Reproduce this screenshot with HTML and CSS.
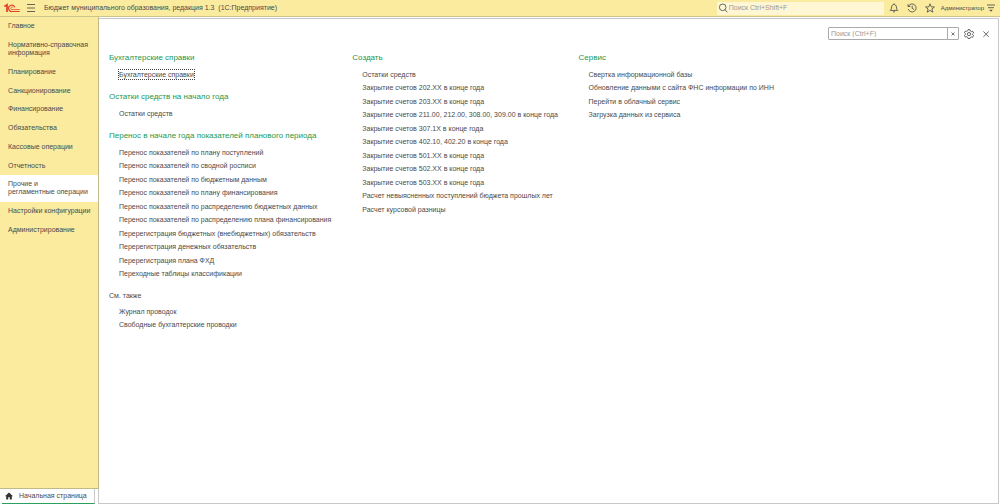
FILE: index.html
```html
<!DOCTYPE html>
<html lang="ru">
<head>
<meta charset="utf-8">
<meta name="viewport" content="width=device-width, initial-scale=1">
<title>Бюджет муниципального образования, редакция 1.3</title>
<link rel="stylesheet" href="styles.css">
</head>
<body>
<div class="app">
  <header class="topbar">
    <svg class="logo" viewBox="0 0 16 10" role="img" aria-label="1С" fill="none" stroke="#e0442e">
      <path d="M.4 3.500 3 1.800V9" stroke-width="1.800"/>
      <path d="M10.800 4.300A3.200 3.200 0 1 0 8.200 8.500H15.800" stroke-width="1.200"/>
      <path d="M9.200 4.600A1.300 1.300 0 1 0 8.200 6.600H15.800" stroke-width=".8"/>
    </svg>
    <button class="icon-button" type="button" aria-label="Меню">
      <svg class="icon" viewBox="0 0 10 10"><path d="M1 1.500h8M1 5h8M1 8.500h8"/></svg>
    </button>
    <h1 class="app-title">Бюджет муниципального образования, редакция 1.3 &nbsp;(1С:Предприятие)</h1>
    <label class="global-search">
      <svg class="icon" viewBox="0 0 10 10"><circle cx="4.700" cy="4.300" r="3.300"/><path d="m7 6.700 2.400 2.600"/></svg>
      <input type="search" placeholder="Поиск Ctrl+Shift+F" aria-label="Поиск">
    </label>
    <div class="topbar-actions">
      <button class="icon-button" type="button" aria-label="Уведомления">
        <svg class="icon" viewBox="0 0 10 10"><path d="M1.200 7.400h7.600C7.700 6.400 7.600 5.600 7.400 4 7.200 2.200 6.200 1.500 5 1.500S2.800 2.200 2.600 4C2.400 5.600 2.300 6.400 1.200 7.400ZM5 .4v1.100M4 8.800h2"/></svg>
      </button>
      <button class="icon-button" type="button" aria-label="История">
        <svg class="icon" viewBox="0 0 10 10"><path d="M1.500 3.200A4 4 0 1 1 1.300 6.200M1 1.200v2.300h2.300M5.200 2.700v2.600l1.900 1.200"/></svg>
      </button>
      <button class="icon-button" type="button" aria-label="Избранное">
        <svg class="icon" viewBox="0 0 10 10"><path d="m5 .8 1.200 3 3.200.200-2.500 2 .9 3.200L5 7.400 2.200 9.200 3.100 6 .6 4l3.200-.2Z"/></svg>
      </button>
    </div>
    <div class="account">
      <a class="user" href="#">Администратор</a>
      <button class="icon-button" type="button" aria-label="Настройки окна">
        <svg class="icon" viewBox="0 0 10 10"><path d="M1 2h8M2 4.700h6"/><path class="solid" d="M3.200 6.800h3.600L5 8.800Z"/></svg>
      </button>
    </div>
  </header>

  <div class="workspace">
    <nav class="sidebar" aria-label="Разделы">
      <a href="#">Главное</a>
      <a href="#">Нормативно-справочная<br>информация</a>
      <a href="#">Планирование</a>
      <a href="#">Санкционирование</a>
      <a href="#">Финансирование</a>
      <a href="#">Обязательства</a>
      <a href="#">Кассовые операции</a>
      <a href="#">Отчетность</a>
      <a class="active" href="#" aria-current="page">Прочие и<br>регламентные операции</a>
      <a href="#">Настройки конфигурации</a>
      <a href="#">Администрирование</a>
    </nav>

    <main class="panel">
      <div class="panel-tools">
        <div class="panel-search">
          <input type="text" placeholder="Поиск (Ctrl+F)" aria-label="Поиск в разделе">
          <button type="button" aria-label="Очистить"><svg class="clear-icon" viewBox="0 0 4 4"><path d="m.5.500 3 3m0-3-3 3"/></svg></button>
        </div>
        <button class="icon-button" type="button" aria-label="Настройка">
          <svg class="icon" viewBox="0 0 10 10"><path d="M4 .7h2l.3 1.300 1 .6 1.300-.4 1 1.700-1 .9v.9l1 .8-1 1.800-1.300-.4-1 .6L6 9.500H4l-.3-1.200-1-.6-1.300.4-1-1.700 1-.9v-.9l-1-.9 1-1.700 1.300.4 1-.6Z"/><circle cx="5" cy="5.100" r="1.600"/></svg>
        </button>
        <button class="icon-button" type="button" aria-label="Закрыть">
          <svg class="icon" viewBox="0 0 10 10"><path d="m2.400 2.500 5.400 5.400m0-5.400-5.400 5.400"/></svg>
        </button>
      </div>

      <div class="columns">
        <div class="column">
          <section class="group">
            <h2>Бухгалтерские справки</h2>
            <ul><li><a class="focused" href="#">Бухгалтерские справки</a></li></ul>
          </section>
          <section class="group">
            <h2>Остатки средств на начало года</h2>
            <ul><li><a href="#">Остатки средств</a></li></ul>
          </section>
          <section class="group">
            <h2>Перенос в начале года показателей планового периода</h2>
            <ul>
              <li><a href="#">Перенос показателей по плану поступлений</a></li>
              <li><a href="#">Перенос показателей по сводной росписи</a></li>
              <li><a href="#">Перенос показателей по бюджетным данным</a></li>
              <li><a href="#">Перенос показателей по плану финансирования</a></li>
              <li><a href="#">Перенос показателей по распределению бюджетных данных</a></li>
              <li><a href="#">Перенос показателей по распределению плана финансирования</a></li>
              <li><a href="#">Перерегистрация бюджетных (внебюджетных) обязательств</a></li>
              <li><a href="#">Перерегистрация денежных обязательств</a></li>
              <li><a href="#">Перерегистрация плана ФХД</a></li>
              <li><a href="#">Переходные таблицы классификации</a></li>
            </ul>
          </section>
          <section class="group see-also">
            <h3>См. также</h3>
            <ul>
              <li><a href="#">Журнал проводок</a></li>
              <li><a href="#">Свободные бухгалтерские проводки</a></li>
            </ul>
          </section>
        </div>
        <div class="column">
          <section class="group">
            <h2>Создать</h2>
            <ul>
              <li><a href="#">Остатки средств</a></li>
              <li><a href="#">Закрытие счетов 202.ХХ в конце года</a></li>
              <li><a href="#">Закрытие счетов 203.ХХ в конце года</a></li>
              <li><a href="#">Закрытие счетов 211.00, 212.00, 308.00, 309.00 в конце года</a></li>
              <li><a href="#">Закрытие счетов 307.1Х в конце года</a></li>
              <li><a href="#">Закрытие счетов 402.10, 402.20 в конце года</a></li>
              <li><a href="#">Закрытие счетов 501.ХХ в конце года</a></li>
              <li><a href="#">Закрытие счетов 502.ХХ в конце года</a></li>
              <li><a href="#">Закрытие счетов 503.ХХ в конце года</a></li>
              <li><a href="#">Расчет невыясненных поступлений бюджета прошлых лет</a></li>
              <li><a href="#">Расчет курсовой разницы</a></li>
            </ul>
          </section>
        </div>
        <div class="column">
          <section class="group">
            <h2>Сервис</h2>
            <ul>
              <li><a href="#">Свертка информационной базы</a></li>
              <li><a href="#">Обновление данными с сайта ФНС информации по ИНН</a></li>
              <li><a href="#">Перейти в облачный сервис</a></li>
              <li><a href="#">Загрузка данных из сервиса</a></li>
            </ul>
          </section>
        </div>
      </div>
    </main>

    <footer class="tabs">
      <a class="tab" href="#">
        <svg class="home" viewBox="0 0 8 8"><path d="M4 .4 0 4.300h1.200V7.500h2V5.200h1.600v2.300h2V4.300H8Z"/></svg>
        Начальная страница
      </a>
    </footer>
  </div>
</div>
</body>
</html>
```

FILE: styles.css
```css
* {
  box-sizing: border-box;
}

body {
  margin: 0;
  font: 7px/8px "Liberation Sans", Arial, sans-serif;
  color: #4a4a4a;
  background: #fff;
}

h1, h2, h3, ul {
  margin: 0;
  padding: 0;
  font-weight: normal;
}

ul {
  list-style: none;
}

a {
  color: inherit;
  text-decoration: none;
}

button, input {
  margin: 0;
  padding: 0;
  border: 0;
  background: none;
  font: inherit;
  color: inherit;
}

input::placeholder {
  color: #999;
  opacity: 1;
}

.app {
  display: flex;
  flex-direction: column;
  min-height: 100vh;
}

.icon-button {
  display: flex;
}

.icon {
  width: 10px;
  height: 10px;
  fill: none;
  stroke: #555;
  stroke-width: .9;
}

.icon .solid {
  fill: #555;
  stroke: none;
}

/* Top bar */
.topbar {
  display: flex;
  align-items: center;
  height: 17px;
  padding: 0 4px;
  background: #fbeb9e;
  border-bottom: 1px solid #cfc48c;
}

.logo {
  width: 16px;
  height: 10px;
  margin-right: 6px;
}

.app-title {
  flex: 1;
  margin-left: 8px;
  font-size: 7px;
  white-space: nowrap;
}

.global-search {
  display: flex;
  align-items: center;
  gap: 1px;
  width: 167px;
  height: 13px;
  padding-left: 1px;
  background: #fff7d4;
}

.global-search input {
  flex: 1;
  min-width: 0;
}

.topbar-actions {
  display: flex;
  align-items: center;
  gap: 8px;
  margin-left: 5px;
}

.account {
  display: flex;
  align-items: center;
  gap: 2px;
  margin-left: 6px;
}

.user {
  font-size: 6px;
}

/* Navigation and content */
.workspace {
  flex: 1;
  display: grid;
  grid-template-columns: 99px 1fr;
  grid-template-rows: 1fr auto;
}

.sidebar {
  background: #fbeb9e;
  border-right: 1px solid #c2b98a;
  border-bottom: 1px solid #c2b98a;
}

.sidebar a {
  display: block;
  padding: 5px 4px 6px 8px;
  white-space: nowrap;
}

.sidebar a:nth-child(4n) {
  padding-bottom: 5px;
}

.sidebar .active {
  background: #fff;
}

.panel {
  grid-row: 1 / 3;
  grid-column: 2;
  margin: 1px 1px 0 0;
  padding: 8px 7px 0 10px;
  border: 1px solid #c8c8c8;
  border-left: 0;
}

.panel-tools {
  display: flex;
  justify-content: flex-end;
  align-items: center;
  gap: 7px;
}

.panel-search {
  display: flex;
  width: 131px;
  height: 13px;
  margin-right: -2px;
  border: 1px solid #aaa;
  border-radius: 1px;
}

.panel-search input {
  flex: 1;
  min-width: 0;
  padding-left: 2px;
}

.panel-search button {
  display: grid;
  place-items: center;
  width: 11px;
  border-left: 1px solid #aaa;
}

.clear-icon {
  width: 4px;
  height: 4px;
  stroke: #555;
  stroke-width: .8;
}

.columns {
  display: grid;
  grid-template-columns: 243fr 226fr 412fr;
  margin-top: 13px;
}

.group {
  margin-bottom: 11px;
  white-space: nowrap;
}

.group h2 {
  margin-bottom: 5px;
  font-size: 8px;
  line-height: 10px;
  color: #1a9850;
}

.group ul {
  padding-left: 10px;
}

.group li {
  line-height: 13px;
}

.group li:nth-child(even) {
  padding-bottom: 1px;
}

.focused {
  padding: 1px 0;
  outline: 1px dotted #444;
}

.see-also h3 {
  margin-bottom: 5px;
  font-size: 7px;
  line-height: 8px;
}

/* Open windows */
.tabs {
  display: flex;
  padding: 0 3px 0 2px;
  border-right: 1px solid #c8c8c8;
}

.tab {
  flex: 1;
  display: flex;
  align-items: center;
  gap: 6px;
  height: 15px;
  padding-left: 3px;
  border-right: 1px solid #c8c8c8;
  border-bottom: 1px solid #2aa05e;
  white-space: nowrap;
}

.home {
  width: 8px;
  height: 8px;
  fill: #333;
}
```
